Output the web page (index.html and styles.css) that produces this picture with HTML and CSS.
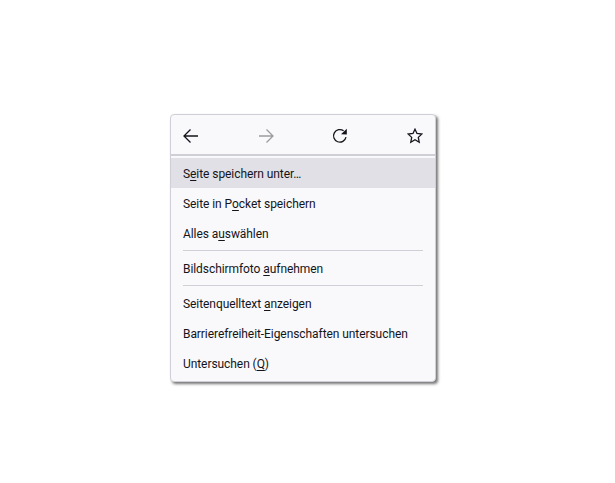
FILE: index.html
```html
<!DOCTYPE html>
<html lang="de">
<head>
<meta charset="UTF-8" />
<title>Kontextmenü</title>
<link rel="stylesheet" href="styles.css">
</head>
<body>
<div class="menu" role="menu">
  <div class="toolbar">
    <svg class="icon" viewBox="0 0 16 16" aria-label="Zurück"><path d="M15 8H1.500M7.500 1.500 1 8l6.500 6.500"/></svg>
    <svg class="icon disabled" viewBox="0 0 16 16" aria-label="Vor"><path d="M1 8h13.500M8.500 1.500 15 8l-6.500 6.500"/></svg>
    <svg class="icon" viewBox="0 0 16 16" aria-label="Neu laden"><path d="M14 9.200A6.300 6.300 0 1 1 11.600 2.800"/><path class="solid" d="M9 6.200 14.800 6.600 14.800 .8z"/></svg>
    <svg class="icon" viewBox="0 0 16 16" aria-label="Lesezeichen"><path d="M8 1.200 10 5.500l4.800.6-3.500 3.300.9 4.800L8 11.800l-4.200 2.400.9-4.800L1.200 6.100 6 5.500z"/></svg>
  </div>
  <div class="rule rule-top"></div>
  <div class="item active">S<u>e</u>ite speichern unter…</div>
  <div class="item">Seite in P<u>o</u>cket speichern</div>
  <div class="item">Alles a<u>u</u>swählen</div>
  <div class="rule"></div>
  <div class="item">Bildschirmfoto <u>a</u>ufnehmen</div>
  <div class="rule"></div>
  <div class="item">Seitenquelltext <u>a</u>nzeigen</div>
  <div class="item">Barrierefreiheit-Eigenschaften untersuchen</div>
  <div class="item">Untersuchen (<u>Q</u>)</div>
</div>
</body>
</html>
```

FILE: styles.css
```css
* {
  box-sizing: border-box;
}

body {
  margin: 0;
  min-height: 100vh;
  background: #fff;
  font-family: Roboto, "Noto Sans", sans-serif;
  padding: 114px 0 0 170px;
}

.menu {
  width: 266px;
  height: 268px;
  background: #f9f9fb;
  border: 1px solid #cfcfd8;
  border-radius: 4px;
  box-shadow: 2px 2px 3px rgba(0, 0, 0, 0.55);
  color: #15141a;
  font-size: 12px;
  letter-spacing: -0.07px;
}

.toolbar {
  height: 39px;
  padding: 2px 12px 0;
  display: flex;
  align-items: center;
  justify-content: space-between;
}

.icon {
  width: 16px;
  height: 16px;
  fill: none;
  stroke: #15141a;
  stroke-width: 1.3;
}

.icon.disabled {
  opacity: 0.4;
}

.icon .solid {
  fill: #15141a;
  stroke: none;
}

.rule {
  height: 1px;
  margin: 2px 12px;
  background: #cfcfd8;
}

.rule-top {
  margin: 0 0 2px;
  height: 2px;
}

.item {
  height: 30px;
  padding: 1px 12px 0;
  display: flex;
  align-items: center;
  white-space: pre;
}

.item u {
  text-underline-offset: 2px;
}

.item.active {
  background: #e0e0e6;
}
```
